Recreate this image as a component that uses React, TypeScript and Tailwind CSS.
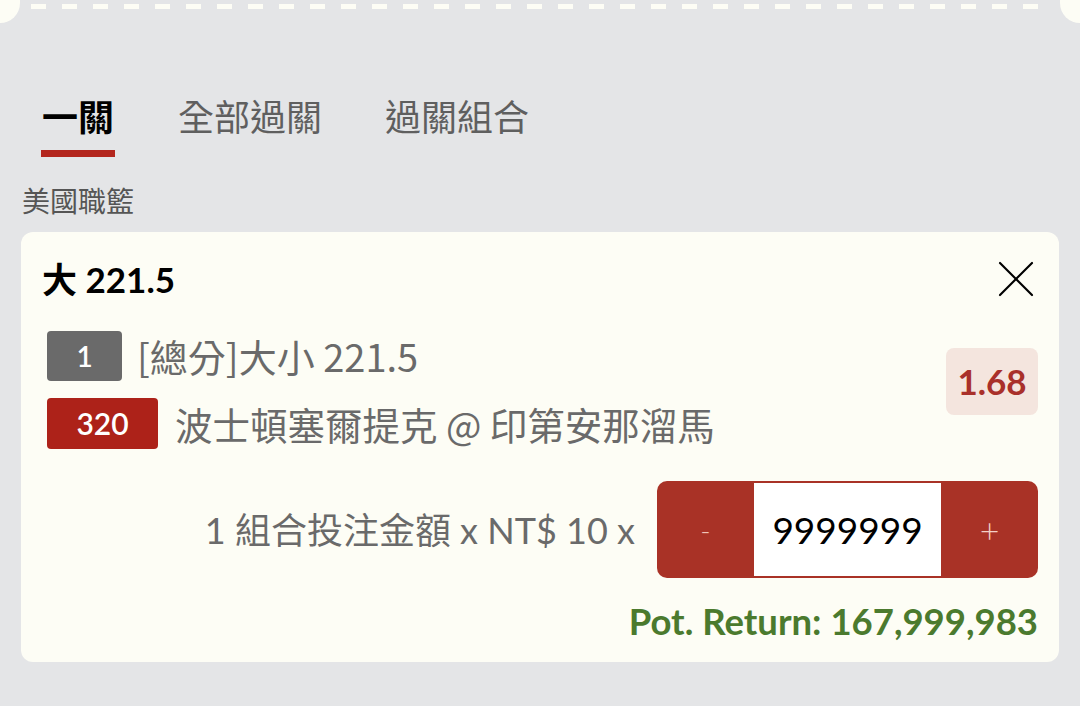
import {X} from "lucide-react";

const CJK = "font-['Lato','Noto_Sans_CJK_TC',sans-serif]";

const tabs = ["一關", "全部過關", "過關組合"];

function TicketEdge() {
    // torn ticket edge left over from the card above
    return (
        <div className="flex h-[25px]">
            <div className="w-5 h-[23px] bg-[#fdfdf5] rounded-br-[20px]"/>
            <div className="flex-1 flex pl-[11px] pt-[4px]">
                {Array.from({length: 33}).map((_, i) => (
                    <div key={i} className="w-[15px] h-[5px] bg-[#fdfdf5] mr-[16px] shrink-0"/>
                ))}
            </div>
            <div className="w-5 h-[23px] bg-[#fdfdf5] rounded-bl-[20px]"/>
        </div>
    );
}

export default function App() {
    return (
        <div className={`w-[1080px] h-[706px] bg-[#e4e5e7] overflow-hidden ${CJK}`}>
            <TicketEdge/>

            {/* Tabs */}
            <div className="flex gap-[63px] pl-[41px] mt-[66px]">
                {tabs.map((t, i) => (
                    <div key={t} className="flex flex-col items-center">
                        <span
                            className={`text-[36px] leading-[48px] font-['Noto_Sans_CJK_TC',sans-serif] ${i === 0 ? "font-bold text-black" : "text-[#5f5f5f]"}`}>
                            {t}
                        </span>
                        <div className={`mt-[11px] h-[7px] w-[74px] ${i === 0 ? "bg-[#b3261e]" : "bg-transparent"}`}/>
                    </div>
                ))}
            </div>

            <div className="pl-[22px] mt-[25px] text-[28px] leading-[36px] text-[#555] font-['Noto_Sans_CJK_TC',sans-serif]">
                美國職籃
            </div>

            {/* Bet card */}
            <div className="mx-[21px] mt-[14px] bg-[#fdfdf5] rounded-[12px] px-[21px] pt-[27px] pb-[21px]">
                <div className="flex items-center justify-between h-[40px]">
                    <span className="text-[35px] leading-[40px] font-bold text-black">大 221.5</span>
                    <X className="w-[64px] h-[64px] text-black -mr-[10px] -my-[12px]" strokeWidth={0.8}/>
                </div>

                <div className="flex items-center mt-[32px] pl-[5px]">
                    <div className="flex-1 flex flex-col gap-[17px]">
                        <div className="flex items-center gap-[15px]">
                            <div
                                className="w-[75px] h-[50px] rounded-[4px] bg-[#6a6a6a] text-white text-[28px] font-semibold flex items-center justify-center">
                                1
                            </div>
                            <span className="text-[38px] leading-[44px] text-[#6a6a6a] font-['Noto_Sans_CJK_TC',sans-serif]">
                                [總分]大小 221.5
                            </span>
                        </div>
                        <div className="flex items-center gap-[17px]">
                            <div
                                className="w-[111px] h-[51px] rounded-[4px] bg-[#ad2219] text-white text-[30px] font-semibold flex items-center justify-center">
                                320
                            </div>
                            <span className="text-[37.5px] leading-[44px] text-[#6a6a6a] font-['Noto_Sans_CJK_TC',sans-serif]">
                                波士頓塞爾提克 @ 印第安那溜馬
                            </span>
                        </div>
                    </div>
                    <div
                        className="w-[92px] h-[67px] -mt-[17px] rounded-[8px] bg-[#f4e5de] text-[#a9302a] font-bold text-[35px] flex items-center justify-center">
                        1.68
                    </div>
                </div>

                <div className="flex items-center justify-end mt-[32px] gap-[22px]">
                    <span className="text-[36px] text-[#6a6a6a]">1 組合投注金額 x NT$ 10 x</span>
                    <div className="flex w-[381px] h-[97px] rounded-[10px] bg-[#a93226] overflow-hidden">
                        <button className="w-[97px] text-[#f0c4b8] text-[28px] font-light">-</button>
                        <div
                            className="my-[2px] w-[187px] bg-white flex items-center justify-center text-black text-[37px]">
                            9999999
                        </div>
                        <button className="w-[97px] text-[#f3d0c6] text-[34px] font-light">+</button>
                    </div>
                </div>

                <div className="mt-[23px] text-right text-[36.5px] leading-[40px] font-bold text-[#4b7a2e]">
                    Pot. Return: 167,999,983
                </div>
            </div>
        </div>
    );
}
